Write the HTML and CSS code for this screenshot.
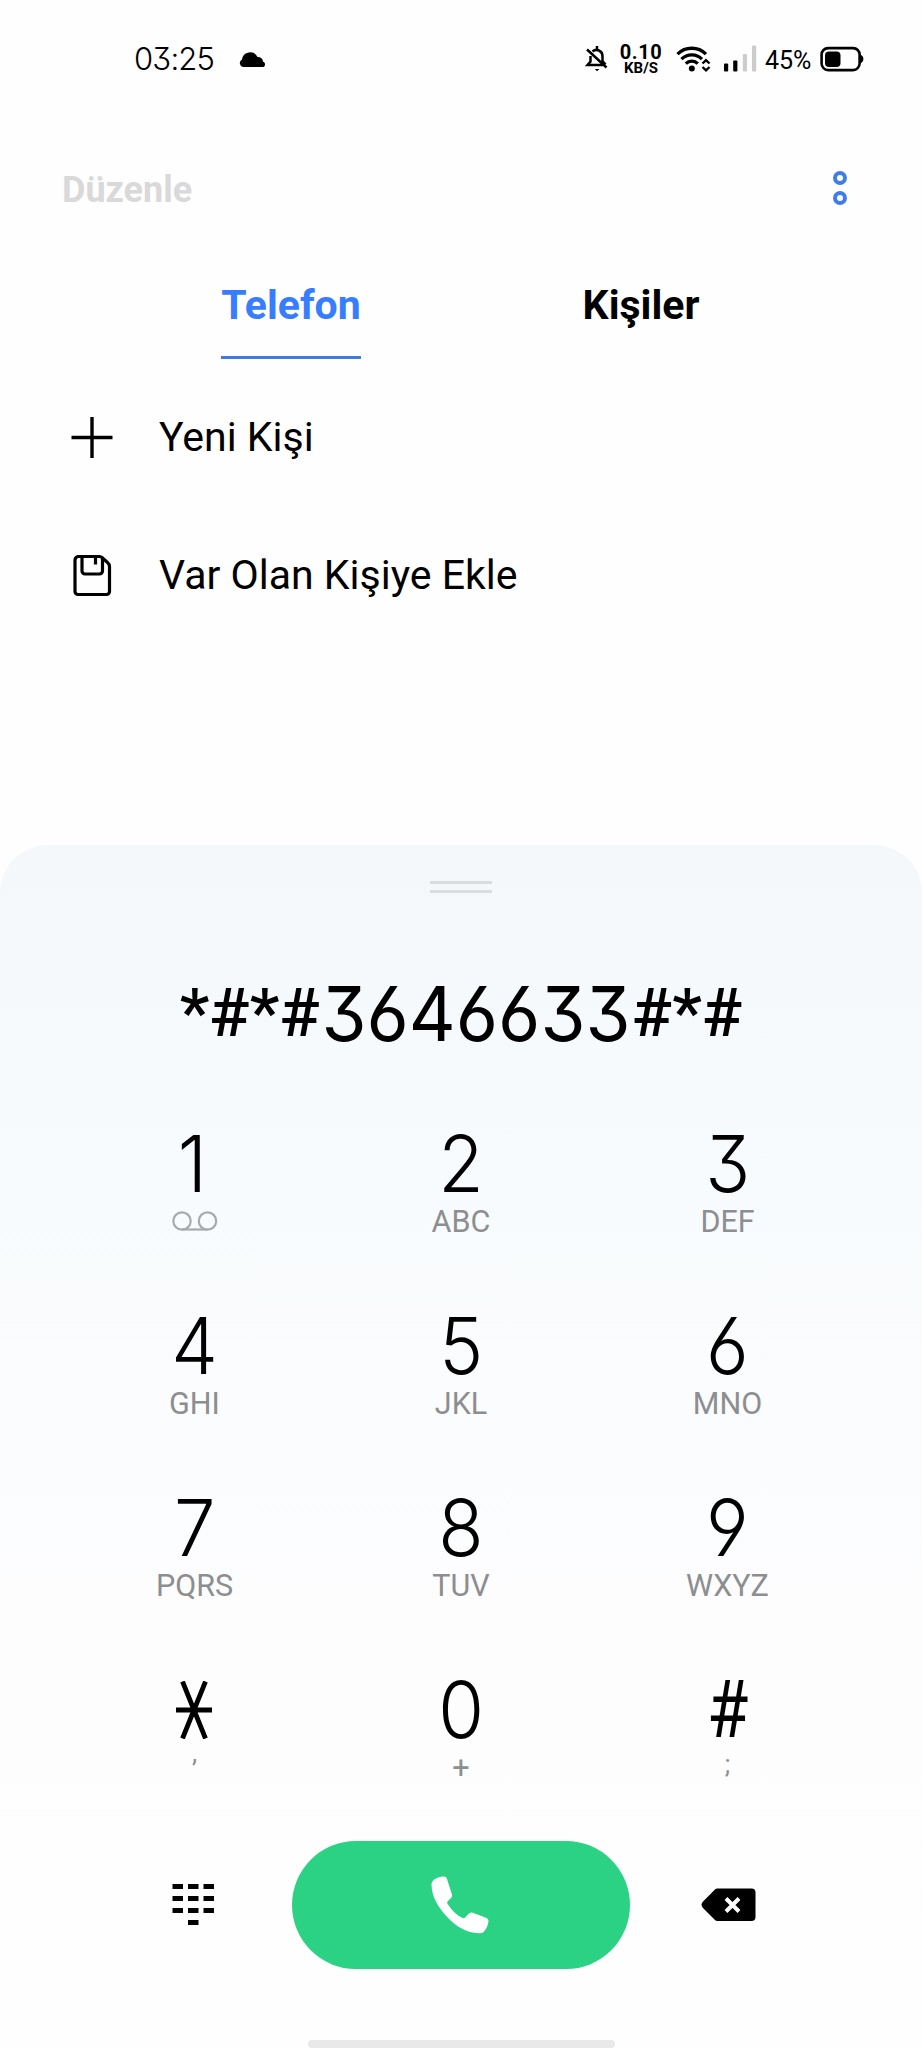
FILE: index.html
```html
<!DOCTYPE html>
<html lang="tr">

<head>
  <meta charset="UTF-8">
  <meta name="viewport" content="width=device-width, initial-scale=1.0">
  <title>Telefon</title>
  <link rel="stylesheet" href="styles.css">
</head>

<body>
  <div class="status-bar">
    <span class="clock">03:25</span>
    <svg class="cloud" width="28" height="17" viewBox="0 0 28 17">
      <path d="M4 16a4 4 0 0 1-1-7.500A8.200 8.200 0 0 1 18.500 6a5 5 0 0 1 5.500 4.500A3 3 0 0 1 24.500 16z"/>
    </svg>
    <div class="status-icons">
      <svg class="bell" width="24" height="28" viewBox="0 0 24 28" fill="none" stroke="#000" stroke-width="2.500">
        <path d="M5.500 11v5.500L2.500 20h15.500M7.500 6.500a6 6 0 0 1 10 4.500v5l3 3.500M12 1v3.500M2 4.500l19.500 18"/>
        <path d="M9.800 24h4.600l-2.300 2.200z" fill="#000" stroke="none"/>
      </svg>
      <div class="speed">
        <span class="speed-value">0.10</span>
        <span class="speed-unit">KB/S</span>
      </div>
      <svg class="wifi" width="36" height="28" viewBox="0 0 36 28" fill="none" stroke="#000" stroke-width="3.300">
        <path d="M1.500 9.200a20 20 0 0 1 28.500 0M5.500 14.200a14.500 14.500 0 0 1 20.500 0M9.800 18.700a8.500 8.500 0 0 1 12 0"/>
        <circle cx="15.800" cy="23.500" r="3" fill="#000" stroke="none"/>
        <path d="M26.500 18.500l3.500-3.300 3.500 3.300M26.500 22l3.500 3.300 3.500-3.300" stroke-width="2.400"/>
      </svg>
      <svg class="signal" width="34" height="28" viewBox="0 0 34 28">
        <rect x="1" y="18.500" width="4.200" height="8" rx="1"/>
        <rect x="10.200" y="15.500" width="4.200" height="11" rx="1"/>
        <rect x="19.800" y="9" width="4.200" height="17.500" rx="1" fill="#ccc"/>
        <rect x="29" y="0.500" width="4.200" height="26" rx="1" fill="#ccc"/>
      </svg>
      <span class="percent">45%</span>
      <svg class="battery" width="44" height="26" viewBox="0 0 44 26">
        <rect x="1.600" y="2.100" width="38" height="22" rx="6.500" fill="none" stroke="#000" stroke-width="2.600"/>
        <rect x="5" y="5.500" width="15.500" height="15.500" rx="4"/>
        <path d="M40 8.500c4.500 1 4.500 8 0 9z"/>
      </svg>
    </div>
  </div>

  <div class="toolbar">
    <span class="edit">Düzenle</span>
    <div class="more">
      <span class="dot"></span>
      <span class="dot"></span>
    </div>
  </div>

  <div class="tabs">
    <div class="tab"><span class="tab-label active">Telefon</span></div>
    <div class="tab"><span class="tab-label">Kişiler</span></div>
  </div>

  <div class="actions">
    <div class="action">
      <svg width="44" height="44" viewBox="0 0 44 44" stroke="#000" stroke-width="3.400">
        <path d="M1.500 22.500h41M22 2v41"/>
      </svg>
      <span>Yeni Kişi</span>
    </div>
    <div class="action">
      <svg width="44" height="44" viewBox="0 0 44 44" fill="none" stroke="#000" stroke-width="3.200">
        <path d="M8 3.500h21.500c1.500 0 2 .5 3 1.400l5 4.600c1.500 1.300 2 2 2 4V38.500a3 3 0 0 1-3 3H8a3 3 0 0 1-3-3v-31a4 4 0 0 1 3-4z"/>
        <path d="M12 3.500v14.500a3 3 0 0 0 3 3h14.500a3 3 0 0 0 3-3V5M25.500 4v7.500"/>
      </svg>
      <span>Var Olan Kişiye Ekle</span>
    </div>
  </div>

  <div class="dialer">
    <div class="handle"></div>

    <div class="number">
      <span class="sym">*#*#</span>
      <span class="digits">3646633</span>
      <span class="sym">#*#</span>
    </div>

    <div class="keypad">
      <div class="key">
        <span class="digit one">1</span>
        <svg class="voicemail" width="46" height="20" viewBox="0 0 46 20" fill="none" stroke="#a6abab" stroke-width="2.200">
          <circle cx="10" cy="10" r="8.700"/>
          <circle cx="35.500" cy="10" r="8.700"/>
          <path d="M10 18.500h25.500"/>
        </svg>
      </div>
      <div class="key"><span class="digit">2</span><span class="letters">ABC</span></div>
      <div class="key"><span class="digit">3</span><span class="letters">DEF</span></div>
      <div class="key"><span class="digit">4</span><span class="letters">GHI</span></div>
      <div class="key"><span class="digit">5</span><span class="letters">JKL</span></div>
      <div class="key"><span class="digit">6</span><span class="letters">MNO</span></div>
      <div class="key"><span class="digit">7</span><span class="letters">PQRS</span></div>
      <div class="key"><span class="digit">8</span><span class="letters">TUV</span></div>
      <div class="key"><span class="digit">9</span><span class="letters">WXYZ</span></div>
      <div class="key">
        <svg class="star" width="38" height="58" viewBox="0 0 38 58" stroke="#000" stroke-width="4.800">
          <path d="M1 29h36M7.500 .5l23 57M30.500 .5l-23 57"/>
        </svg>
        <span class="letters pause">,</span>
      </div>
      <div class="key"><span class="digit">0</span><span class="letters">+</span></div>
      <div class="key"><span class="digit hash">#</span><span class="letters wait">;</span></div>
    </div>

    <div class="bottom">
      <div class="side">
        <svg class="grid-icon" width="42" height="42" viewBox="0 0 42 42">
          <path d="M.5 0H11v5H.5zM16 0h10.500v5H16zM31.500 0H42v5H31.500zM.5 12H11v5H.5zM16 12h10.500v5H16zM31.500 12H42v5H31.500zM.5 24H11v5H.5zM16 24h10.500v5H16zM31.500 24H42v5H31.500zM16 36h10.500v5H16z"/>
        </svg>
      </div>
      <div class="call">
        <svg width="58" height="58" viewBox="0 0 58 58" fill="#fff">
          <path d="M12.500 .5C14.500 .2 15.500 1 16 3l4.800 15c.5 2 .1 3.200-1 4.300L17 25c-1 1-1 1.700-.3 3 4 6.500 8.800 11 14.500 13.800 1.500.7 2.200.5 3.200-.5l3.500-3.700c1.200-1.200 2.500-1.400 4-.8l13 5c2.300 1 2.800 2 2.500 4.200-.5 3.500-2 6.500-4 9-1.200 1.600-2.400 2.200-4.500 2.200-9 .1-19.500-3.500-29-12.500C7.500 33 .5 20.500.5 8.500.5 4 6 1 12.500.5z"/>
        </svg>
      </div>
      <div class="side">
        <svg class="backspace" width="55" height="34" viewBox="0 0 55 34">
          <path d="M17 .5h33.500a4 4 0 0 1 4 4v24.500a4 4 0 0 1-4 4H17c-1.800 0-2.800-.5-4-2L2 20c-2-2.200-2-4.300 0-6.500L13 2.500C14.200 1 15.200.5 17 .5z"/>
          <path d="M25 10.500l13 13M38 10.500l-13 13" stroke="#fff" stroke-width="4"/>
        </svg>
      </div>
    </div>

    <div class="home-bar"></div>
  </div>
</body>

</html>
```
FILE: styles.css
```css
* {
  box-sizing: border-box;
}

body {
  margin: 0;
  width: 922px;
  height: 2048px;
  overflow: hidden;
  background-color: #fefefe;
  color: #000;
  font-family: Roboto, "Liberation Sans", sans-serif;
}

svg {
  display: block;
  flex: none;
}

/* status bar */

.status-bar {
  display: flex;
  align-items: center;
  height: 118px;
  padding: 0 58px 0 134px;
}

.clock {
  width: 80px;
  margin-top: -1px;
  font-family: Inter, sans-serif;
  font-feature-settings: "cv09";
  font-weight: 300;
  font-size: 31px;
  letter-spacing: -0.8px;
  white-space: nowrap;
}

.cloud {
  margin-left: 25px;
}

.status-icons {
  display: flex;
  align-items: center;
  margin-left: auto;
}

.speed {
  display: flex;
  flex-direction: column;
  align-items: center;
  width: 42px;
  margin-left: 11px;
  font-weight: 700;
}

.speed-value {
  font-size: 20px;
  line-height: 17px;
  letter-spacing: 0.6px;
}

.speed-unit {
  font-size: 15px;
  line-height: 14px;
}

.wifi {
  margin-left: 14px;
}

.signal {
  margin-left: 11px;
}

.percent {
  width: 47px;
  margin: 2px 8px 0;
  font-size: 25px;
  white-space: nowrap;
}

/* header */

.toolbar {
  display: flex;
  justify-content: space-between;
  align-items: center;
  height: 140px;
  padding: 0 75px 0 62px;
}

.edit {
  margin-top: 3px;
  color: #d9d9d9;
  font-size: 36px;
  font-weight: 700;
}

.more {
  display: flex;
  flex-direction: column;
  gap: 6px;
}

.dot {
  width: 14px;
  height: 14px;
  border: 4px solid #3f7de8;
  border-radius: 50%;
}

.tabs {
  display: flex;
  height: 101px;
  padding: 0 106px 0 116px;
}

.tab {
  flex: 1;
  text-align: center;
}

.tab-label {
  display: inline-block;
  height: 101px;
  padding-top: 23px;
  font-size: 41px;
  font-weight: 700;
}

.active {
  color: #377dff;
  border-bottom: 3px solid #3f7bdc;
}

.actions {
  height: 486px;
  padding: 9px 70px 0;
}

.action {
  display: flex;
  align-items: center;
  gap: 45px;
  height: 138px;
  font-size: 41px;
}

/* dialer */

.dialer {
  display: flex;
  flex-direction: column;
  align-items: center;
  height: 1203px;
  border-radius: 48px 48px 0 0;
  background: linear-gradient(#f4f8fb, #f8fbfd 30%, #fdfdfe 65%, #fefefe);
}

.handle {
  width: 62px;
  height: 12px;
  margin-top: 36px;
  border-top: 3px solid #d9dde0;
  border-bottom: 3px solid #d9dde0;
}

.number {
  display: flex;
  align-items: center;
  height: 100px;
  margin-top: 70px;
}

.digits {
  display: flex;
  justify-content: center;
  width: 312px;
  font-family: Inter, sans-serif;
  font-feature-settings: "cv03", "cv04", "cv09";
  font-size: 75px;
  transform: scaleX(0.97);
}

.sym {
  font-size: 67px;
  font-weight: 500;
}

.keypad {
  display: grid;
  grid-template-columns: repeat(3, 266.5px);
  grid-auto-rows: 182px;
  margin-top: 50px;
}

.key {
  display: flex;
  flex-direction: column;
  align-items: center;
}

.digit {
  height: 91px;
  padding-top: 11px;
  font-family: Inter, sans-serif;
  font-feature-settings: "cv03", "cv04", "cv09";
  font-weight: 300;
  font-size: 78px;
  line-height: 80px;
  transform: scaleX(0.95);
}

.one {
  margin-left: -4px;
}

.hash {
  font-family: Roboto, sans-serif;
  font-size: 80px;
  font-weight: 400;
  transform: scaleX(0.84);
}

.letters {
  color: #8c8e8f;
  font-size: 30.5px;
  line-height: 36px;
}

.star {
  margin: 22px 2px 11px 0;
}

.voicemail {
  margin-top: 7px;
}

.pause,
.wait {
  font-size: 26px;
  line-height: 28px;
}

.pause {
  line-height: 6px;
}

.bottom {
  display: grid;
  grid-template-columns: 231px 338px 231px;
}

.side {
  display: flex;
  align-items: center;
}

.grid-icon {
  margin-left: 111px;
}

.backspace {
  margin-left: 71px;
}

.call {
  display: flex;
  justify-content: center;
  align-items: center;
  height: 128px;
  padding-right: 3px;
  border-radius: 64px;
  background-color: #2cd283;
}

.home-bar {
  width: 307px;
  height: 8px;
  margin-top: auto;
  border-radius: 4px;
  background-color: #e9e9e9;
}
```
